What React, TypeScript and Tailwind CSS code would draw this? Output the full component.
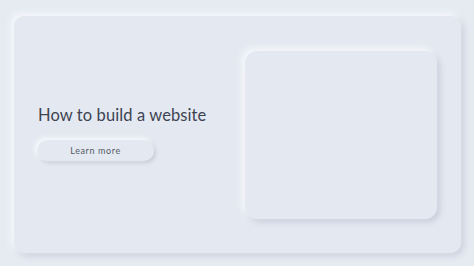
export default function App() {
  return (
    <div className="w-[474px] h-[266px] bg-[#e6ebf2] pt-4 pl-[14px] font-['Lato',sans-serif]">
      <div className="w-[447px] h-[237px] rounded-[10px] bg-[#e4e9f1] shadow-[-3px_-3px_6px_#f6f8fb,3px_3px_7px_#c9d0dc] flex items-center justify-between pl-6 pr-6">
        <div className="flex flex-col items-start pb-[5px]">
          <h1 className="text-[16.5px] text-[#3d4351] tracking-[0.1px]">How to build a website</h1>
          <button className="mt-[12px] -ml-px w-[117px] h-[21px] rounded-full bg-[#e4e9f1] shadow-[-2px_-2px_4px_#f8fafc,2px_2px_4px_#c5ccd8] text-[9px] font-normal tracking-[0.6px] text-[#535967]">
            Learn more
          </button>
        </div>
        <div className="w-[192px] h-[168px] rounded-[12px] bg-[#e4e9f1] shadow-[-3px_-3px_6px_#f6f8fb,3px_3px_6px_#c6cdd9]" />
      </div>
    </div>
  );
}
